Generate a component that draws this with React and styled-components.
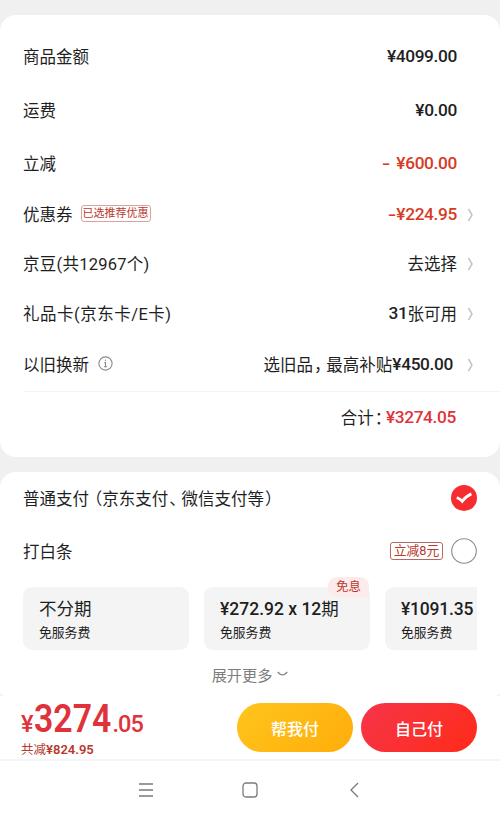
import styled, { createGlobalStyle } from "styled-components";

const GlobalStyle = createGlobalStyle`
  * {
    box-sizing: border-box;
  }
  body {
    margin: 0;
    background: #f0f0f0;
    color: #1f1f1f;
    font-family: Roboto, "Noto Sans CJK SC", sans-serif;
    font-size: 16.5px;
  }
`;

const Page = styled.div`
  width: 500px;
  height: 820px;
  padding-top: 15px;
  display: flex;
  flex-direction: column;
  overflow: hidden;
  white-space: nowrap;
`;

const Card = styled.section`
  height: ${(props) => props.height}px;
  flex-shrink: 0;
  background: #fff;
  border-radius: 16px;
  padding-left: 23px;
`;

const Summary = styled(Card)`
  padding-top: 15px;
  margin-bottom: 15px;
`;

const Payment = styled(Card)`
  border-radius: 16px 16px 5px 5px;
`;

const Row = styled.div`
  display: flex;
  align-items: center;
  justify-content: space-between;
  height: ${(props) => props.height}px;
  padding: 0 26px 2px 0;
`;

const Label = styled.div`
  display: flex;
  align-items: center;
  letter-spacing: ${(props) => props.spacing || 0}px;
`;

const Value = styled.div`
  display: flex;
  align-items: center;
  color: ${(props) => props.color || "#1f1f1f"};
`;

const Num = styled.span`
  font-size: 17.3px;
  font-weight: 500;
  letter-spacing: -0.35px;
`;

const Minus = styled.span`
  display: inline-block;
  margin-right: ${(props) => props.gap || 1}px;
  transform: scaleX(1.4);
`;

/* half-width full stops and brackets, spaced by hand */
const Punct = styled.span`
  font-feature-settings: "halt";
  margin-left: ${(props) => props.before || 0}px;
  margin-right: ${(props) => props.after || 0}px;
`;

const Arrow = styled.svg`
  width: 7px;
  height: 14px;
  margin-left: ${(props) => props.gap || 10}px;
  margin-top: 2px;
  visibility: ${(props) => (props.$hide ? "hidden" : "visible")};
`;

const Tag = styled.span`
  display: flex;
  align-items: center;
  justify-content: center;
  width: 70px;
  height: 17px;
  margin-left: 8px;
  border: 1px solid #d9a39d;
  border-radius: 3px;
  color: #b8392e;
  font-size: 11px;
  line-height: 11px;
`;

const BigTag = styled(Tag)`
  width: 53px;
  height: 18px;
  margin: 0 8px 0 0;
  border-color: #b8665e;
  font-size: 12.8px;
  line-height: 13px;
`;

const InfoIcon = styled.svg`
  width: 15px;
  height: 15px;
  margin-left: 9px;
`;

const Divider = styled.div`
  height: 1px;
  background: #f3f3f3;
`;

const Total = styled.div`
  display: flex;
  align-items: center;
  justify-content: flex-end;
  height: 49px;
  padding-right: 44px;
`;

const PayRow = styled(Row)`
  padding-right: 23px;
`;

const Side = styled.div`
  display: flex;
  align-items: center;
`;

const Radio = styled.svg`
  width: 26px;
  height: 26px;
`;

const Plans = styled.div`
  display: flex;
  gap: 15px;
  width: 454px;
  margin-top: -11px;
  padding-top: 20px;
  overflow: hidden;
`;

const Plan = styled.div`
  position: relative;
  flex: 0 0 166px;
  height: 63px;
  padding: 10px 0 0 16px;
  border-radius: 9px;
  background: #f4f4f4;
`;

const PlanTitle = styled.div`
  font-size: ${(props) => props.size || 17.5}px;
  font-weight: ${(props) => props.weight || 500};
  line-height: 24px;
  letter-spacing: ${(props) => props.spacing || 0}px;
`;

const Unit = styled.span`
  font-weight: 400;
`;

const PlanNote = styled.div`
  font-size: 12.8px;
  line-height: 18px;
  margin-top: 3px;
`;

const Corner = styled.span`
  position: absolute;
  top: -10px;
  right: 1px;
  width: 41px;
  height: 20px;
  border-radius: 9px 9px 0 9px;
  background: #fcebea;
  color: #b8392e;
  font-size: 12.5px;
  line-height: 19px;
  text-align: center;
`;

const More = styled.div`
  display: flex;
  align-items: center;
  justify-content: center;
  height: 46px;
  padding: 2px 23px 0 0;
  color: #7d7d7d;
  font-size: 15.2px;
`;

const MoreIcon = styled.svg`
  width: 11px;
  height: 6px;
  margin-left: 5px;
`;

const PayBar = styled.div`
  display: flex;
  align-items: center;
  justify-content: space-between;
  height: 65px;
  flex-shrink: 0;
  padding: 0 23px 0 21px;
  background: #fff;
  border-bottom: 2px solid #f5f6f8;
`;

const Price = styled.div`
  display: flex;
  align-items: baseline;
  height: 38px;
  line-height: 38px;
  margin-top: 4px;
  color: #e0323a;
  font-weight: 500;
  font-size: 23.5px;
`;

const Whole = styled.span`
  width: 77px;
  margin-left: 1px;
  font-size: 38px;
  font-weight: 600;
  transform: scaleX(0.89);
  transform-origin: left;
`;

const Cents = styled.span`
  margin-left: 1px;
  letter-spacing: -0.9px;
`;

const Saved = styled.div`
  margin-top: 3px;
  color: #b8392e;
  font-size: 12.5px;
  line-height: 18px;
`;

const SavedNum = styled.span`
  font-size: 13px;
  font-weight: 600;
`;

const Buttons = styled.div`
  display: flex;
  gap: 8px;
`;

const Button = styled.button`
  width: 116px;
  height: 49px;
  padding: 0;
  border: 0;
  border-radius: 25px;
  background: ${(props) => props.background};
  color: #fff;
  font-family: inherit;
  font-size: 16px;
  font-weight: 500;
`;

const SystemNav = styled.nav`
  display: flex;
  align-items: center;
  justify-content: center;
  gap: 88px;
  height: 59px;
  padding-bottom: 2px;
  flex-shrink: 0;
  background: #fff;
`;

const NavIcon = styled.svg`
  width: 16px;
  height: 16px;
  fill: none;
  stroke: #7a7a7a;
  stroke-width: 1.3;
`;

const Chevron = ({ hide, gap }) => (
  <Arrow viewBox="0 0 7 14" $hide={hide} gap={gap}>
    <path d="M1.5 1 L5 7 L1.5 13" fill="none" stroke="#c4c4c4" strokeWidth="1.5" />
  </Arrow>
);

const App = () => {
  return (
    <Page>
      <GlobalStyle />
      <Summary height={442}>
        <Row height={54}>
          <Label>商品金额</Label>
          <Value>
            <Num>¥4099.00</Num>
            <Chevron hide />
          </Value>
        </Row>
        <Row height={53}>
          <Label>运费</Label>
          <Value>
            <Num>¥0.00</Num>
            <Chevron hide />
          </Value>
        </Row>
        <Row height={53}>
          <Label>立减</Label>
          <Value color="#d63a25">
            <Num>
              <Minus gap={8}>-</Minus>¥600.00
            </Num>
            <Chevron hide />
          </Value>
        </Row>
        <Row height={49}>
          <Label>
            优惠券<Tag>已选推荐优惠</Tag>
          </Label>
          <Value color="#d63a25">
            <Num>
              <Minus gap={2}>-</Minus>¥224.95
            </Num>
            <Chevron />
          </Value>
        </Row>
        <Row height={50}>
          <Label spacing={0.25}>京豆(共12967个)</Label>
          <Value>
            去选择
            <Chevron />
          </Value>
        </Row>
        <Row height={49}>
          <Label spacing={0.5}>礼品卡(京东卡/E卡)</Label>
          <Value>
            <Num>31</Num>张可用
            <Chevron />
          </Value>
        </Row>
        <Row height={53}>
          <Label>
            以旧换新
            <InfoIcon viewBox="0 0 15 15" fill="none" stroke="#8a8a8a">
              <circle cx="7.5" cy="7.5" r="6.6" strokeWidth="1.1" />
              <path d="M7.5 3.7v1.4M6.3 6.6h1.2v4M5.9 10.8h3.2" strokeWidth="1.1" />
            </InfoIcon>
          </Label>
          <Value>
            选旧品<Punct before={1} after={4}>，</Punct>最高补贴<Num>¥450.00</Num>
            <Chevron gap={14} />
          </Value>
        </Row>
        <Divider />
        <Total>
          合计<Punct before={1} after={3}>：</Punct>
          <Value color="#e0323a">
            <Num>¥3274.05</Num>
          </Value>
        </Total>
      </Summary>

      <Payment height={224}>
        <PayRow height={53}>
          <Label>
            普通支付<Punct before={5}>（</Punct>京东支付
            <Punct before={1} after={4}>、</Punct>微信支付等
            <Punct before={1}>）</Punct>
          </Label>
          <Radio viewBox="0 0 26 26">
            <circle cx="13" cy="13" r="13" fill="#f72c30" />
            <path
              d="M5.8 12.4 Q9.3 14 11.3 16.2 Q14.8 11.3 20.4 8.9"
              fill="none"
              stroke="#fff"
              strokeWidth="2.8"
            />
          </Radio>
        </PayRow>
        <PayRow height={53}>
          <Label>打白条</Label>
          <Side>
            <BigTag>立减8元</BigTag>
            <Radio viewBox="0 0 26 26">
              <circle cx="13" cy="13" r="12.3" fill="#fff" stroke="#8c8c8c" strokeWidth="1.1" />
            </Radio>
          </Side>
        </PayRow>
        <Plans>
          <Plan>
            <PlanTitle weight={400}>不分期</PlanTitle>
            <PlanNote>免服务费</PlanNote>
          </Plan>
          <Plan>
            <Corner>免息</Corner>
            <PlanTitle>
              ¥272.92 x 12<Unit>期</Unit>
            </PlanTitle>
            <PlanNote>免服务费</PlanNote>
          </Plan>
          <Plan>
            <PlanTitle spacing={-0.2}>¥1091.35</PlanTitle>
            <PlanNote>免服务费</PlanNote>
          </Plan>
        </Plans>
        <More>
          展开更多
          <MoreIcon viewBox="0 0 11 6">
            <path d="M.7 1 Q5.5 6.8 10.3 1" fill="none" stroke="#858585" strokeWidth="1.3" />
          </MoreIcon>
        </More>
      </Payment>

      <PayBar>
        <div>
          <Price>
            ¥<Whole>3274</Whole>
            <Cents>.05</Cents>
          </Price>
          <Saved>
            共减<SavedNum>¥824.95</SavedNum>
          </Saved>
        </div>
        <Buttons>
          <Button background="linear-gradient(135deg, #ffc51c, #ffad0a)">帮我付</Button>
          <Button background="linear-gradient(135deg, #f6354a, #ff2b18)">自己付</Button>
        </Buttons>
      </PayBar>
      <SystemNav>
        <NavIcon viewBox="0 0 16 16">
          <path d="M1 2h14M1 8h14M1 14h14" />
        </NavIcon>
        <NavIcon viewBox="0 0 16 16">
          <rect x="1" y="1" width="14" height="14" rx="3" />
        </NavIcon>
        <NavIcon viewBox="0 0 16 16">
          <path d="M12 1L5 8l7 7" />
        </NavIcon>
      </SystemNav>
    </Page>
  );
};

export default App;
